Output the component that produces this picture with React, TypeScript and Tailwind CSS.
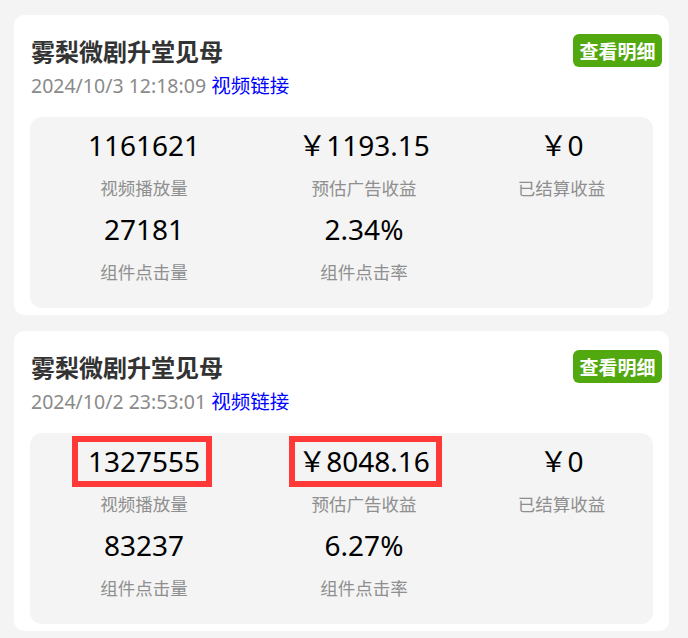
import React from "react";

type Card = {
  title: string;
  time: string;
  play: string;
  income: string;
  settled: string;
  clicks: string;
  rate: string;
  highlight?: boolean;
};

const cards: Card[] = [
  {
    title: "雾梨微剧升堂见母",
    time: "2024/10/3 12:18:09",
    play: "1161621",
    income: "￥1193.15",
    settled: "￥0",
    clicks: "27181",
    rate: "2.34%",
  },
  {
    title: "雾梨微剧升堂见母",
    time: "2024/10/2 23:53:01",
    play: "1327555",
    income: "￥8048.16",
    settled: "￥0",
    clicks: "83237",
    rate: "6.27%",
    highlight: true,
  },
];

const numFont = { fontFamily: '"Noto Sans", "Noto Sans CJK SC", sans-serif' };

function Stat({
  value,
  label,
  box,
}: {
  value: string;
  label: string;
  box?: "a" | "b";
}) {
  return (
    <div className="relative flex flex-col items-center">
      <div className="h-[40px] leading-[38px] text-[28px] text-black whitespace-nowrap font-['Noto_Sans','Noto_Sans_CJK_SC',sans-serif]">
        {value}
      </div>
      <div className="h-[44px] leading-[44px] text-[17.5px] text-[#8f8f8f] font-['Noto_Sans_CJK_SC',sans-serif]">
        {label}
      </div>
      {box === "a" && (
        <div className="absolute top-[-6px] left-[42px] w-[140px] h-[51px] border-[6px] border-[#ff3838] pointer-events-none" />
      )}
      {box === "b" && (
        <div className="absolute top-[-6px] left-[31px] w-[153px] h-[51px] border-[6px] border-[#ff3838] pointer-events-none" />
      )}
    </div>
  );
}

function StatCard({ c }: { c: Card }) {
  return (
    <div className="ml-[14px] mr-[19px] bg-white rounded-[10px] pl-[16px] pr-[16px] pt-[19px] pb-[7px]">
      <div className="flex items-center justify-between mr-[-9px]">
        <div className="pl-[1px] h-[33px] leading-[33px] text-[24px] font-bold text-[#333333] font-['Noto_Sans_CJK_SC',sans-serif]">
          {c.title}
        </div>
        <div className="h-[33px] w-[89px] rounded-[6px] bg-[#52a80f] text-white font-bold text-[19px] leading-[33px] text-center font-['Noto_Sans_CJK_SC',sans-serif]">
          查看明细
        </div>
      </div>
      <div className="pl-[1px] mt-[4px] h-[28px] leading-[28px] text-[19.5px] whitespace-nowrap font-['Noto_Sans','Noto_Sans_CJK_SC',sans-serif]">
        <span className="text-[#8a8a8a]">{c.time}</span>{" "}
        <span className="text-[#0000ff] font-['Noto_Sans_CJK_SC',sans-serif]">视频链接</span>
      </div>
      <div className="mt-[18px] bg-[#f4f4f4] rounded-[12px] pt-[9px] pb-[14px] grid grid-cols-[228px_212px_1fr]">
        <Stat value={c.play} label="视频播放量" box={c.highlight ? "a" : undefined} />
        <Stat value={c.income} label="预估广告收益" box={c.highlight ? "b" : undefined} />
        <Stat value={c.settled} label="已结算收益" />
        <Stat value={c.clicks} label="组件点击量" />
        <Stat value={c.rate} label="组件点击率" />
        <div />
      </div>
    </div>
  );
}

export default function App() {
  return (
    <div className="w-[688px] h-[638px] overflow-hidden bg-[#f4f4f4] pt-[15px]" style={numFont}>
      <div className="flex flex-col gap-[16px]">
        {cards.map((c, i) => (
          <StatCard key={i} c={c} />
        ))}
      </div>
    </div>
  );
}
